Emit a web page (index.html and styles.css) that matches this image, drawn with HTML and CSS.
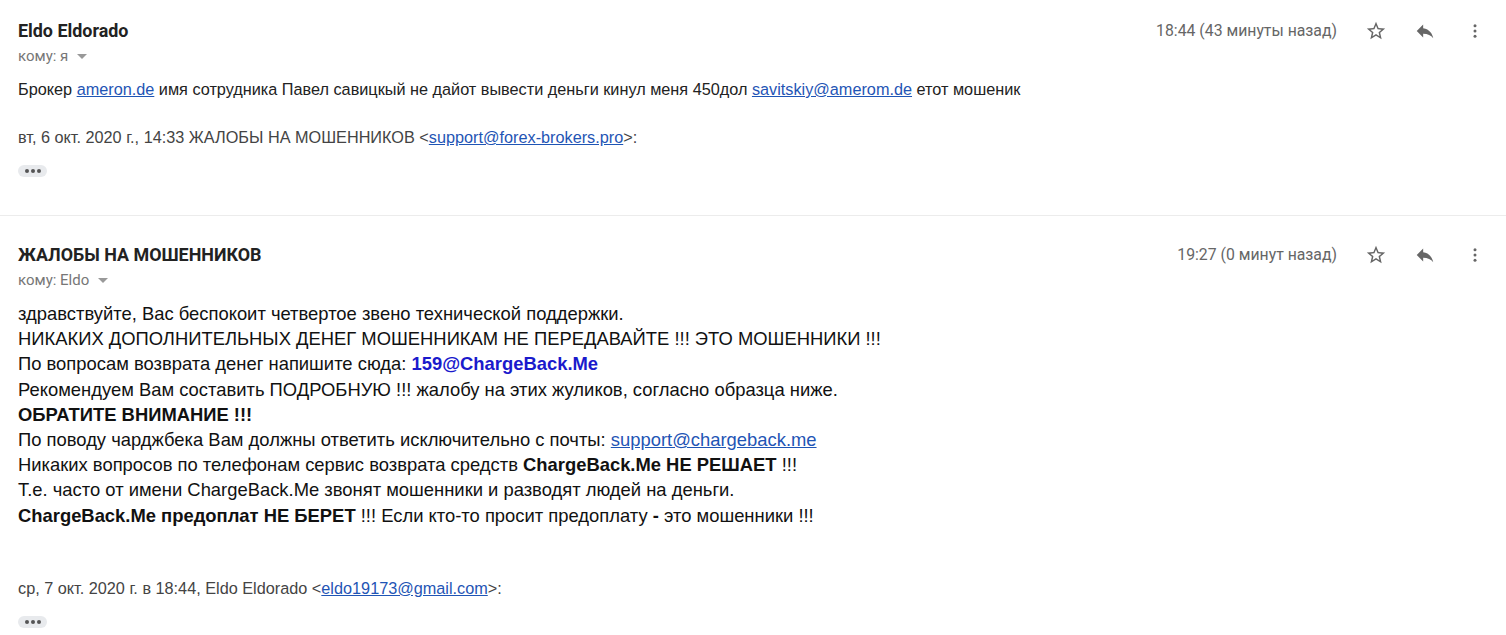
FILE: index.html
```html
<!DOCTYPE html>
<html lang="ru">
<head>
<meta charset="utf-8">
<link rel="stylesheet" href="styles.css">
</head>
<body>
<div class="thread">
  <div class="message first">
    <div class="head">
      <div class="who">
        <div class="name">Eldo Eldorado</div>
        <div class="to">кому: я <span class="caret"></span></div>
      </div>
      <div class="meta">
        <span class="time">18:44 (43 минуты назад)</span>
        <span class="icon star"><svg viewBox="0 0 24 24" width="22" height="22"><path d="M22 9.24l-7.19-.62L12 2 9.19 8.63 2 9.24l5.46 4.73L5.82 21 12 17.27 18.18 21l-1.63-7.03L22 9.24zM12 15.4l-3.76 2.27 1-4.28-3.32-2.88 4.38-.38L12 6.1l1.71 4.04 4.38.38-3.32 2.88 1 4.28L12 15.4z"/></svg></span>
        <span class="icon reply"><svg viewBox="0 0 24 24" width="22" height="22"><path d="M10 9V5l-7 7 7 7v-4.1c5 0 8.5 1.6 11 5.1-1-5-4-10-11-11z"/></svg></span>
        <span class="icon more"><svg viewBox="0 0 24 24" width="22" height="22"><circle cx="12" cy="5" r="2"/><circle cx="12" cy="12" r="2"/><circle cx="12" cy="19" r="2"/></svg></span>
      </div>
    </div>
    <div class="body">
      <div class="text">Брокер <a href="#">ameron.de</a> имя сотрудника Павел савицкый не дайот вывести деньги кинул меня 450дол <a href="#">savitskiy@amerom.de</a> етот мошеник</div>
      <div class="quote q1">вт, 6 окт. 2020 г., 14:33 ЖАЛОБЫ НА МОШЕННИКОВ &lt;<a href="#">support@forex-brokers.pro</a>&gt;:</div>
      <div class="pill"><i></i><i></i><i></i></div>
    </div>
  </div>
  <div class="message second">
    <div class="head">
      <div class="who">
        <div class="name">ЖАЛОБЫ НА МОШЕННИКОВ</div>
        <div class="to">кому: Eldo <span class="caret"></span></div>
      </div>
      <div class="meta">
        <span class="time">19:27 (0 минут назад)</span>
        <span class="icon star"><svg viewBox="0 0 24 24" width="22" height="22"><path d="M22 9.24l-7.19-.62L12 2 9.19 8.63 2 9.24l5.46 4.73L5.82 21 12 17.27 18.18 21l-1.63-7.03L22 9.24zM12 15.4l-3.76 2.27 1-4.28-3.32-2.88 4.38-.38L12 6.1l1.71 4.04 4.38.38-3.32 2.88 1 4.28L12 15.4z"/></svg></span>
        <span class="icon reply"><svg viewBox="0 0 24 24" width="22" height="22"><path d="M10 9V5l-7 7 7 7v-4.1c5 0 8.5 1.6 11 5.1-1-5-4-10-11-11z"/></svg></span>
        <span class="icon more"><svg viewBox="0 0 24 24" width="22" height="22"><circle cx="12" cy="5" r="2"/><circle cx="12" cy="12" r="2"/><circle cx="12" cy="19" r="2"/></svg></span>
      </div>
    </div>
    <div class="body">
      <div class="lines">
        <div>здравствуйте, Вас беспокоит четвертое звено технической поддержки.</div>
        <div>НИКАКИХ ДОПОЛНИТЕЛЬНЫХ ДЕНЕГ МОШЕННИКАМ НЕ ПЕРЕДАВАЙТЕ !!! ЭТО МОШЕННИКИ !!!</div>
        <div>По вопросам возврата денег напишите сюда: <b class="blue">159@ChargeBack.Me</b></div>
        <div>Рекомендуем Вам составить ПОДРОБНУЮ !!! жалобу на этих жуликов, согласно образца ниже.</div>
        <div><b>ОБРАТИТЕ ВНИМАНИЕ !!!</b></div>
        <div>По поводу чарджбека Вам должны ответить исключительно с почты: <a href="#">support@chargeback.me</a></div>
        <div>Никаких вопросов по телефонам сервис возврата средств <b>ChargeBack.Me НЕ РЕШАЕТ</b> !!!</div>
        <div>Т.е. часто от имени ChargeBack.Me звонят мошенники и разводят людей на деньги.</div>
        <div><b>ChargeBack.Me предоплат НЕ БЕРЕТ</b> !!! Если кто-то просит предоплату <b>-</b> это мошенники !!!</div>
      </div>
      <div class="quote q2">ср, 7 окт. 2020 г. в 18:44, Eldo Eldorado &lt;<a href="#">eldo19173@gmail.com</a>&gt;:</div>
      <div class="pill"><i></i><i></i><i></i></div>
    </div>
  </div>
</div>
</body>
</html>
```

FILE: styles.css
```css
html, body {
  margin: 0;
  padding: 0;
  background: #fff;
}
body {
  width: 1506px;
  height: 635px;
  overflow: hidden;
  font-family: Roboto, "Liberation Sans", Arial, sans-serif;
  color: #222;
}
.message {
  padding: 21px 0 0 18px;
}
.first {
  height: 194px;
  border-bottom: 1px solid #ececec;
}
.second {
  padding-top: 29px;
}
.head {
  display: flex;
  justify-content: space-between;
  align-items: flex-start;
}
.name {
  font-weight: 700;
  font-size: 17.9px;
  line-height: 20px;
  color: #222;
}
.to {
  margin-top: 7px;
  font-size: 15px;
  line-height: 16px;
  color: #777;
  display: flex;
  align-items: center;
  gap: 9px;
}
.caret {
  width: 0;
  height: 0;
  border-left: 5px solid transparent;
  border-right: 5px solid transparent;
  border-top: 5px solid #999;
  margin-top: 1px;
}
.meta {
  display: flex;
  align-items: center;
  height: 20px;
  padding-right: 22px;
}
.time {
  font-size: 15.8px;
  color: #666;
  margin-right: 28px;
  line-height: 20px;
}
.icon {
  width: 22px;
  height: 22px;
  display: flex;
  align-items: center;
  justify-content: center;
  fill: #666;
}
.icon.reply { margin-left: 27px; }
.icon.more { margin-left: 30px; width: 18px; }
.icon.more svg { width: 18px; height: 18px; }
.body {
  font-family: "Liberation Sans", Arial, sans-serif;
  font-size: 16.25px;
  line-height: 25px;
  color: #222;
}
.body .text {
  margin-top: 13px;
}
.lines {
  margin-top: 13px;
  font-size: 18.4px;
  line-height: 25.2px;
  color: #111;
}
.quote {
  color: #444;
}
.q1 { margin-top: 23px; }
.q2 { margin-top: 48px; }
a {
  color: #1f55b5;
  text-decoration: underline;
}
.blue { color: #1a1acc; }
.pill {
  margin-top: 15px;
  width: 29px;
  height: 12px;
  border-radius: 6px;
  background: #e8eaed;
  display: flex;
  align-items: center;
  justify-content: center;
  gap: 2px;
}
.pill i {
  width: 4px;
  height: 4px;
  border-radius: 50%;
  background: #555;
}
```
